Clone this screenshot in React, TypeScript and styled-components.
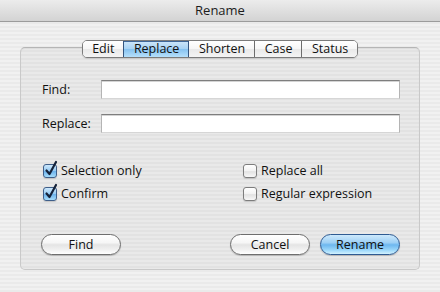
import React from 'react';
import styled, { createGlobalStyle, css } from 'styled-components';

const Global = createGlobalStyle`
  html, body { margin: 0; padding: 0; background: #ececec; }
  body { font-family: "Open Sans", "Liberation Sans", sans-serif; }
  * { box-sizing: border-box; }
`;

const Window = styled.div`
  width: 440px;
  height: 292px;
  display: flex;
  flex-direction: column;
  overflow: hidden;
  background: repeating-linear-gradient(to bottom, #f1f1f1 0, #f1f1f1 2px, #eaeaea 2px, #eaeaea 4px);
  font-family: "Open Sans", "Liberation Sans", sans-serif;
  font-size: 12.5px;
  color: #111;
`;

const TitleBar = styled.div`
  height: 22px;
  flex: none;
  display: flex;
  align-items: center;
  justify-content: center;
  background: linear-gradient(to bottom, #ececec 0%, #e2e2e2 40%, #d3d3d3 100%);
  border-bottom: 1px solid #9c9c9c;
  font-size: 13px;
  color: #1c1c1c;
  padding-bottom: 1px;
`;

const Content = styled.div`
  padding: 18px 20px 0;
  display: flex;
  flex-direction: column;
`;

const TabRow = styled.div`
  display: flex;
  justify-content: center;
  margin-bottom: -11px;
  position: relative;
  z-index: 2;
`;

const Tabs = styled.div`
  display: flex;
  height: 18px;
  border: 1px solid #7b7b7b;
  border-radius: 5px;
  overflow: hidden;
  box-shadow: 0 1px 1px rgba(0, 0, 0, 0.12);
`;

const Tab = styled.div<{ $active?: boolean }>`
  padding: 0 9px 0 9.5px;
  display: flex;
  align-items: center;
  line-height: 16px;
  background: linear-gradient(to bottom, #ffffff 0%, #f6f6f6 50%, #e9e9e9 51%, #f4f4f4 100%);
  & + & { border-left: 1px solid #6d6d6d; }
  ${(p) =>
    p.$active &&
    css`
      background: linear-gradient(to bottom, #cfe7fa 0%, #a8d3f4 48%, #86c2f0 52%, #b6e0fb 100%);
      border-left: 1px solid #34557f !important;
      border-right: 1px solid #34557f;
      margin-right: -1px;
      position: relative;
      z-index: 1;
      box-shadow: inset 0 1px 0 #3f6799;
    `}
`;

const GroupBox = styled.div`
  border: 1px solid #c9c9c9;
  border-top-color: #b5b5b5;
  border-radius: 5px;
  background: rgba(0, 0, 0, 0.03);
  box-shadow: inset 0 1px 1px rgba(0, 0, 0, 0.06);
  padding: 32px 19px 14px 20px;
  display: flex;
  flex-direction: column;
`;

const FieldRow = styled.div`
  display: flex;
  align-items: center;
  height: 19px;
  & + & { margin-top: 15px; }
`;

const Label = styled.label`
  width: 60px;
  flex: none;
  padding-left: 1px;
`;

const TextField = styled.input`
  flex: 1;
  height: 19px;
  margin: 0;
  padding: 0 3px;
  border: 1px solid #b4b4b4;
  border-top-color: #7e7e7e;
  border-bottom-color: #d6d6d6;
  background: #fff;
  box-shadow: inset 0 1px 0 #d4d4d4;
  outline: none;
  font: inherit;
`;

const Options = styled.div`
  display: grid;
  grid-template-columns: 200px 1fr;
  row-gap: 6px;
  margin-top: 29px;
`;

const Option = styled.div`
  display: flex;
  align-items: center;
  height: 17px;
  padding-left: 2px;
  gap: 4px;
`;

const Box = styled.div<{ $checked?: boolean }>`
  width: 14px;
  height: 14px;
  flex: none;
  border-radius: 3px;
  border: 1px solid #7d7d7d;
  background: linear-gradient(to bottom, #ffffff 0%, #f2f2f2 50%, #e2e2e2 55%, #f7f7f7 100%);
  box-shadow: 0 1px 1px rgba(0, 0, 0, 0.15);
  position: relative;
  ${(p) =>
    p.$checked &&
    css`
      border-color: #3f5f8a;
      background: linear-gradient(to bottom, #cde8fc 0%, #97cbf3 48%, #6cb2ec 52%, #a5dcfb 100%);
    `}
`;

const Check = styled.svg`
  position: absolute;
  left: 1px;
  top: -4px;
  overflow: visible;
`;

const ButtonRow = styled.div`
  display: flex;
  gap: 10px;
  margin-top: 32px;
`;

const Spacer = styled.div`
  flex: 1;
`;

const Button = styled.button<{ $primary?: boolean }>`
  width: 80px;
  height: 21px;
  margin: 0;
  padding: 0 0 1px;
  border-radius: 11px;
  border: 1px solid #6e6e6e;
  font: inherit;
  color: #111;
  background: linear-gradient(to bottom, #ffffff 0%, #f6f6f6 40%, #e4e4e4 52%, #f2f2f2 80%, #ffffff 100%);
  box-shadow: 0 1px 1px rgba(0, 0, 0, 0.2);
  ${(p) =>
    p.$primary &&
    css`
      border-color: #2f5b92;
      background: linear-gradient(to bottom, #cde9fc 0%, #9ed0f5 40%, #6db7ef 52%, #9dd8fa 80%, #d2f2ff 100%);
    `}
`;

const CheckOption: React.FC<{ label: string; checked?: boolean }> = ({ label, checked }) => (
  <Option>
    <Box $checked={checked}>
      {checked && (
        <Check width="12" height="16" viewBox="0 0 12 16">
          <path d="M1.5 9.5 L4.5 13 L11 1" fill="none" stroke="#15223a" strokeWidth="2.2" strokeLinecap="round" strokeLinejoin="round" />
        </Check>
      )}
    </Box>
    <span>{label}</span>
  </Option>
);

export default function App() {
  return (
    <>
      <Global />
      <Window>
        <TitleBar>Rename</TitleBar>
        <Content>
          <TabRow>
            <Tabs>
              <Tab>Edit</Tab>
              <Tab $active>Replace</Tab>
              <Tab>Shorten</Tab>
              <Tab>Case</Tab>
              <Tab>Status</Tab>
            </Tabs>
          </TabRow>
          <GroupBox>
            <FieldRow>
              <Label>Find:</Label>
              <TextField />
            </FieldRow>
            <FieldRow>
              <Label>Replace:</Label>
              <TextField />
            </FieldRow>
            <Options>
              <CheckOption label="Selection only" checked />
              <CheckOption label="Replace all" />
              <CheckOption label="Confirm" checked />
              <CheckOption label="Regular expression" />
            </Options>
            <ButtonRow>
              <Button>Find</Button>
              <Spacer />
              <Button>Cancel</Button>
              <Button $primary>Rename</Button>
            </ButtonRow>
          </GroupBox>
        </Content>
      </Window>
    </>
  );
}
